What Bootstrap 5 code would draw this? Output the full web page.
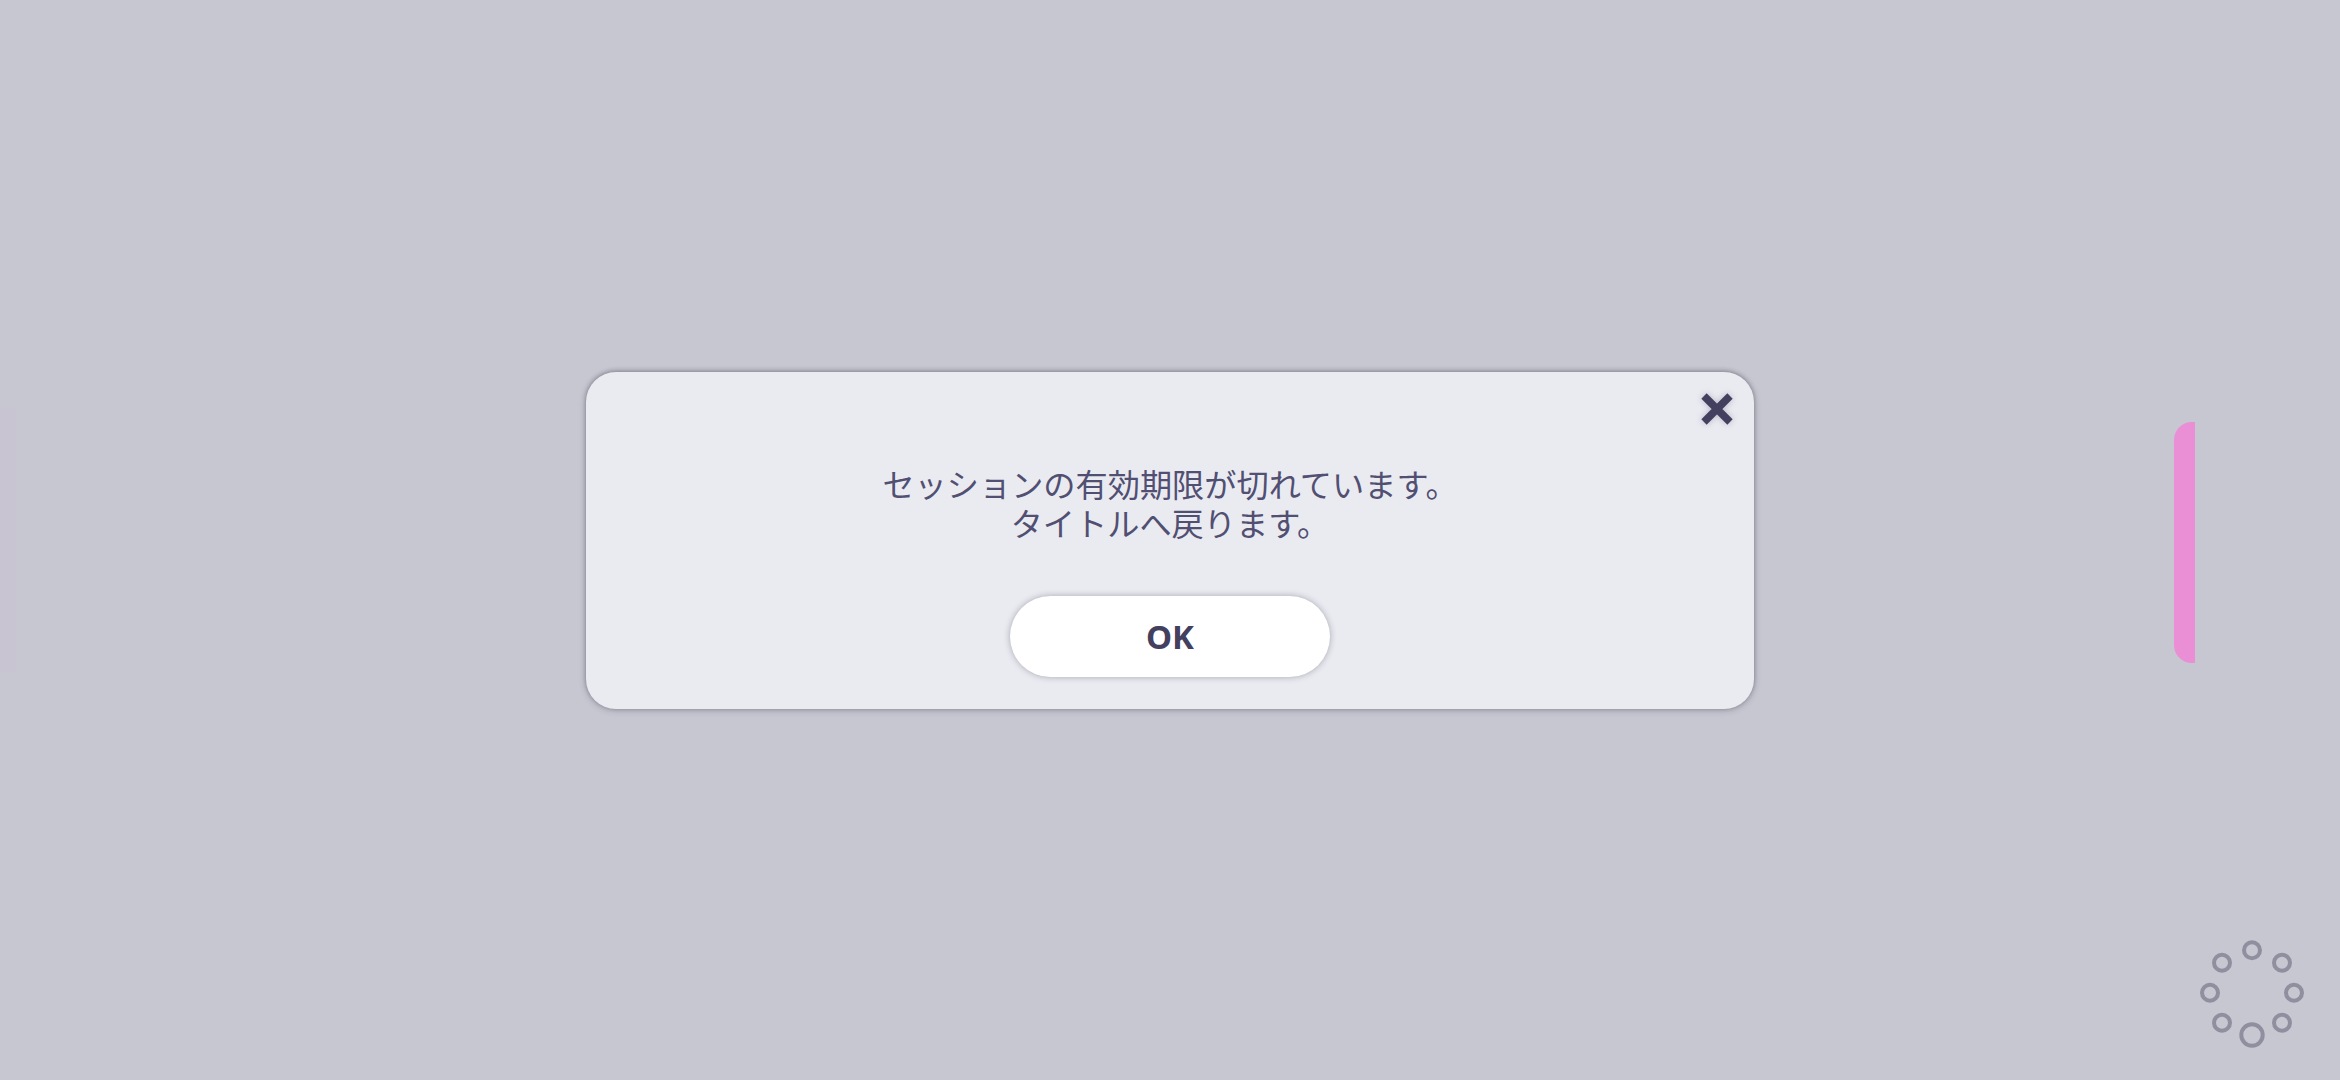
<!doctype html>
<html lang="ja">
<head>
<meta charset="utf-8">
<title>セッション</title>
<link href="https://cdn.jsdelivr.net/npm/bootstrap@5.3.0/dist/css/bootstrap.min.css" rel="stylesheet">
<style>
html,body{height:100%;}
body{background:#c7c7d1;font-family:"Noto Sans CJK JP","Noto Sans",sans-serif;overflow:hidden;}
.stage{width:2340px;height:1080px;padding-top:1px;}
.dialog-box{width:1168px;height:337px;background:#eaebf1;border:0;border-radius:30px;box-shadow:0 -1px 4px rgba(40,40,60,.32),0 1px 7px rgba(40,40,60,.28);padding-top:92px;}
.dialog-msg{font-size:32.2px;line-height:39px;color:#514f72;font-weight:400;margin:0 0 54px;}
.ok-btn{width:320px;height:81px;background:#fff;border:0;color:#43405f;font-family:"Noto Sans",sans-serif;font-weight:700;font-size:33px;line-height:1;box-shadow:0 0 6px rgba(40,40,60,.35);padding:0;}
.ok-btn:hover{background:#fff;color:#43405f;}
.close-x{position:absolute;top:18px;right:18px;width:38px;height:38px;padding:0;border:0;background:transparent;line-height:0;}
.close-x svg{filter:drop-shadow(0 0 3px rgba(64,61,99,.3));}
.side-tab{position:absolute;left:2174px;top:422px;width:21px;height:241px;background:#ea8fd6;border-radius:18px 0 0 18px;}
.side-tint{position:absolute;left:0;top:408px;width:16px;height:264px;background:#c8c4d1;}
.spin{position:absolute;left:2200px;top:931px;}
</style>
</head>
<body>
<main class="stage position-relative d-flex align-items-center justify-content-center">
  <div class="side-tint"></div>
  <div class="side-tab"></div>
  <section class="card dialog-box position-relative align-items-center text-center">
    <button type="button" class="close-x" aria-label="閉じる">
      <svg width="38" height="38" viewBox="0 0 38 38"><path d="M6 6 L32 32 M32 6 L6 32" stroke="#43405f" stroke-width="7.5" fill="none"/></svg>
    </button>
    <p class="dialog-msg">セッションの有効期限が切れています。<br>タイトルへ戻ります。</p>
    <button type="button" class="btn ok-btn rounded-pill">OK</button>
  </section>
  <svg class="spin" width="104" height="120" viewBox="0 0 104 120" fill="none" stroke="#8f8f9f" stroke-width="4">
    <circle cx="52" cy="19.3" r="8"/>
    <circle cx="82" cy="31.7" r="8"/>
    <circle cx="94" cy="61.7" r="8"/>
    <circle cx="82" cy="91.7" r="8"/>
    <circle cx="52" cy="104" r="10.7"/>
    <circle cx="22" cy="91.7" r="8"/>
    <circle cx="10" cy="61.7" r="8"/>
    <circle cx="22" cy="31.7" r="8"/>
  </svg>
</main>
<script src="https://cdn.jsdelivr.net/npm/bootstrap@5.3.0/dist/js/bootstrap.bundle.min.js"></script>
</body>
</html>
